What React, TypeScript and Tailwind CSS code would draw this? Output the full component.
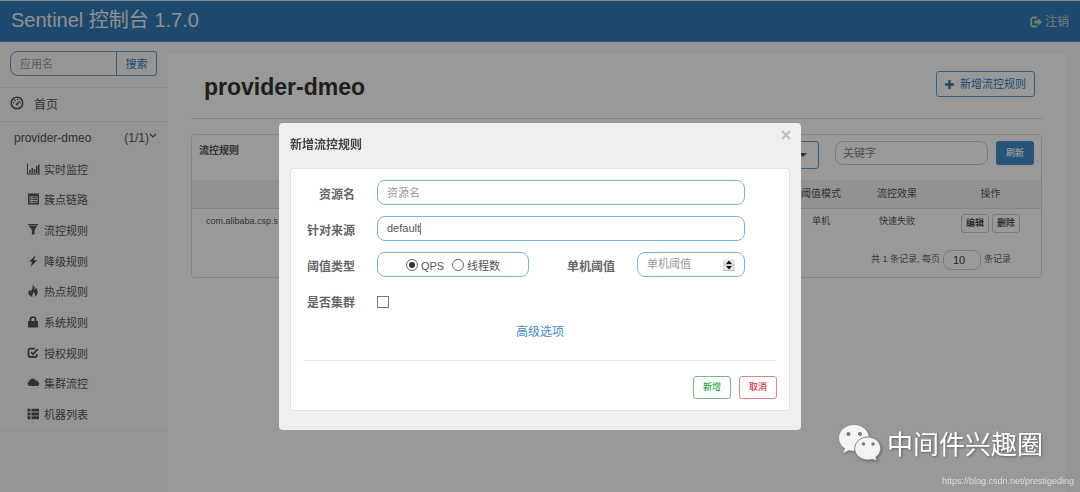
import type { ReactNode } from 'react'

type MenuItem = {
  label: string
  icon: ReactNode
}

const menu: MenuItem[] = [
  {
    label: '实时监控',
    icon: (
      <>
        <path d="M0 .5h1v10h12v1H0z" />
        <path d="M2.2 7h1.500v3H2.200zM4.500 5H6v5H4.500zM6.800 6h1.500v4H6.800zM9 3h1.500v7H9zM11 1.500h1.500V10H11z" />
      </>
    ),
  },
  {
    label: '簇点链路',
    icon: (
      <path
        fillRule="evenodd"
        d="M1 .5h11v11H1zM2.500 3v7h8V3zM3 3.500h1.500v1.300H3zM5.300 3.500H10v1.300H5.300zM3 5.700h1.500V7H3zM5.300 5.700H10V7H5.300zM3 8h1.500v1.300H3zM5.300 8H10v1.300H5.300z"
      />
    ),
  },
  { label: '流控规则', icon: <path d="M1 0h10v1.300H1zM1.700 1.800h8.600L7.600 6v4L4.900 11V6z" /> },
  { label: '降级规则', icon: <path d="M8.500.3 2.200 6.700h3L3.500 11.700 10.300 5.200H7z" /> },
  {
    label: '热点规则',
    icon: (
      <path d="M5.500 0c2.900 1.500 1.700 3.800 1.900 5 .9-.4 1.100-1.600.7-2.800 3 1.800 4.100 7.200-.5 9.600.9-2.400.1-3.600-1.100-4.700.1 1.600-1.900 2.500-1 4.800C1.600 10.700 0 7.900 2.600 4.400c.1 1.100.4 1.600.9 1.900C5.400 4.600 6.200 2.500 5.500 0z" />
    ),
  },
  {
    label: '系统规则',
    icon: (
      <path
        fillRule="evenodd"
        d="M2.500 5V3.500C2.500 1.500 3.800.3 6 .3s3.500 1.200 3.500 3.200V5H11v6.500H1V5zm1.900 0h3.200V3.500C7.600 2.500 7 2 6 2s-1.600.5-1.600 1.500z"
      />
    ),
  },
  {
    label: '授权规则',
    icon: (
      <path
        d="M8 1.700H3.200A1.700 1.700 0 0 0 1.500 3.400v4.900A1.700 1.700 0 0 0 3.200 10h4.900a1.700 1.700 0 0 0 1.700-1.700V7M4 5l2 2.200 4.900-5"
        fill="none"
        stroke="currentColor"
        strokeWidth="1.800"
      />
    ),
  },
  {
    label: '集群流控',
    icon: (
      <path d="M2.500 9A2.300 2.300 0 0 1 2 4.600C2.500 3 3.700 1.500 5.600 1.500c1.600 0 2.700.9 3.100 2.100 1-.2 1.900.3 2.200 1.200A2.200 2.200 0 0 1 10.500 9z" />
    ),
  },
  {
    label: '机器列表',
    icon: <path d="M.5.700h3v2.900h-3zM4.500.700h7.500v2.900H4.500zM.5 4.500h3v2.900h-3zM4.500 4.500h7.500v2.900H4.500zM.5 8.300h3v2.900h-3zM4.500 8.300h7.500v2.900H4.500z" />,
  },
]

const fieldClass =
  'h-[25px] rounded-lg border border-[#7fb0dc] bg-white px-[9px] text-[11px] text-[#555] outline-none placeholder:text-[#999]'
const labelClass = 'w-16 shrink-0 pt-1 text-right text-xs font-bold text-[#666]'
const radioClass =
  'size-3 appearance-none rounded-full border border-[#666] bg-white bg-clip-content p-[2px] checked:bg-[#333]'

function Header() {
  return (
    <header className="flex h-[42px] items-center justify-between border-y border-t-[#dbe6f0] border-b-[#5c8ab5] bg-[#337ab7] px-[11px]">
      <h1 className="pb-[2px] text-xl text-[#eee]">Sentinel 控制台 1.7.0</h1>
      <a href="#logout" className="flex items-center gap-[3px] pt-[2px] text-xs text-[#bcd6c0]">
        <svg viewBox="0 0 12 12" className="size-3" fill="currentColor">
          <path
            d="M7 1.500H3.200a2 2 0 0 0-2 2v5a2 2 0 0 0 2 2H7"
            fill="none"
            stroke="currentColor"
            strokeWidth="1.800"
          />
          <path d="M8 2.300 12 6 8 9.700V7.500H4.500v-3H8z" />
        </svg>
        注销
      </a>
    </header>
  )
}

function Sidebar() {
  return (
    <aside className="w-[168px] shrink-0 text-[#555]">
      <div className="flex h-[46px] items-start border-b border-[#e7e7e7] px-[10px] pt-[9px]">
        <input
          aria-label="应用名"
          placeholder="应用名"
          className="h-[25px] w-[107px] rounded-l-lg border border-[#5f9fd6] px-[9px] text-[11px] outline-none placeholder:text-[#999]"
        />
        <button className="-ml-px h-[25px] w-[41px] rounded-r-[3px] border border-[#5f9fd6] pt-px text-[11px] text-[#337ab7]">
          搜索
        </button>
      </div>
      <a href="#home" className="flex h-[34px] items-center gap-[10px] border-b border-[#e7e7e7] px-[10px] text-xs">
        <svg viewBox="0 0 14 14" className="mb-1 size-[14px]" fill="currentColor">
          <circle cx="7" cy="7" r="5.800" fill="none" stroke="currentColor" strokeWidth="1.600" />
          <path d="m6.300 7.500 3.400-3 .6.500-2.600 3.500a1 1 0 1 1-1.400-1z" />
          <circle cx="3.700" cy="6.700" r=".8" />
          <circle cx="5" cy="4.400" r=".8" />
          <circle cx="7.500" cy="3.500" r=".8" />
          <circle cx="10.300" cy="7" r=".8" />
        </svg>
        首页
      </a>
      <div className="flex h-8 items-center px-[14px] text-xs">
        <span className="flex-1">provider-dmeo</span>
        <span>(1/1)</span>
        <svg viewBox="0 0 8 8" className="-mr-[3px] mb-1 size-2" fill="none" stroke="currentColor" strokeWidth="1.200">
          <path d="m1 2 3 3 3-3" />
        </svg>
      </div>
      <nav className="grid h-[277px] auto-rows-fr border-b border-[#eee]">
        {menu.map((item) => (
          <a key={item.label} href="#menu" className="flex items-center gap-1 pt-px pl-[27px] text-[11px]">
            <svg viewBox="0 0 13 12" className="mb-[2px] h-3 w-[13px]" fill="currentColor">
              {item.icon}
            </svg>
            {item.label}
          </a>
        ))}
      </nav>
    </aside>
  )
}

function RuleCard() {
  const smallButton = 'h-[19px] rounded-[3px] border border-[#ccc] px-1 text-[9px] font-medium text-[#333]'
  return (
    <section className="mt-[15px] rounded border border-[#ddd]">
      <div className="flex h-[45px] items-start px-[7px] pt-[6px]">
        <h3 className="flex-1 pt-[2px] text-[10px] font-bold text-[#555]">流控规则</h3>
        <button
          aria-label="机器"
          className="mr-4 flex h-7 w-[180px] items-center justify-end rounded-[3px] border border-[#5f9fd6] pr-[11px] text-[#555]"
        >
          <svg viewBox="0 0 8 4" className="h-1 w-2" fill="currentColor">
            <path d="M0 0h8L4 4z" />
          </svg>
        </button>
        <input
          aria-label="关键字"
          placeholder="关键字"
          className="mr-2 h-6 w-[153px] rounded-lg border border-[#ccc] px-[7px] text-[11px] outline-none placeholder:text-[#888]"
        />
        <button className="h-6 w-[38px] rounded-[3px] bg-[#428bca] pt-px text-[9px] font-medium text-white">刷新</button>
      </div>
      <table className="w-full table-fixed text-center text-[#555]">
        <colgroup>
          <col />
          <col className="w-[66px]" />
          <col className="w-[86px]" />
          <col className="w-[101px]" />
        </colgroup>
        <thead>
          <tr className="h-7 border-b border-[#ddd] bg-[#f0f3f7] text-[10px]">
            <th></th>
            <th className="font-normal">阈值模式</th>
            <th className="font-normal">流控效果</th>
            <th className="font-normal">操作</th>
          </tr>
        </thead>
        <tbody>
          <tr className="h-[30px] text-[9px]">
            <td className="pb-1 pl-[14px] text-left">com.alibaba.csp.s</td>
            <td className="pb-1">单机</td>
            <td className="pb-1">快速失败</td>
            <td>
              <div className="flex justify-center gap-[3px]">
                <button className={smallButton}>编辑</button>
                <button className={smallButton}>删除</button>
              </div>
            </td>
          </tr>
        </tbody>
      </table>
      <div className="flex h-[39px] items-center justify-end gap-[3px] pt-1 pr-[30px] text-[9px] text-[#666]">
        <span>共 1 条记录, 每页</span>
        <input
          aria-label="每页"
          defaultValue="10"
          className="h-5 w-[38px] rounded-lg border border-[#ccc] px-[9px] text-[11px] text-[#444] outline-none"
        />
        <span>条记录</span>
      </div>
    </section>
  )
}

function RuleDialog() {
  return (
    <div className="fixed inset-0 flex items-start justify-center bg-black/40 pt-[123px]">
      <div role="dialog" aria-labelledby="dialog-title" className="w-[522px] rounded bg-[#efefef] px-[11px] pb-[19px]">
        <div className="relative flex h-[45px] items-center">
          <h4 id="dialog-title" className="pb-[2px] text-xs font-bold text-[#444]">
            新增流控规则
          </h4>
          <button aria-label="关闭" className="absolute top-[3px] -right-[5px] p-1 text-[#bbb]">
            <svg viewBox="0 0 10 10" className="size-[10px]" stroke="currentColor" strokeWidth="2">
              <path d="m1 1 8 8M9 1 1 9" />
            </svg>
          </button>
        </div>
        <form className="rounded border border-[#e1e1e1] bg-white px-3 py-[11px]">
          <div className="-ml-3 flex flex-col gap-[11px] pr-8">
            <div className="flex items-center gap-[22px]">
              <label htmlFor="resource" className={labelClass}>资源名</label>
              <input id="resource" placeholder="资源名" className={`${fieldClass} min-w-0 flex-1`} />
            </div>
            <div className="flex items-center gap-[22px]">
              <label htmlFor="origin" className={labelClass}>针对来源</label>
              <div className={`${fieldClass} flex min-w-0 flex-1 items-center`}>
                <input id="origin" defaultValue="default" className="w-[33px] outline-none" />
                <span className="h-3 w-px bg-[#777]" />
              </div>
            </div>
            <div className="flex items-center gap-[22px]">
              <span className={labelClass}>阈值类型</span>
              <div className={`${fieldClass} flex w-[152px] items-center justify-center gap-2`}>
                <label className="flex items-center gap-[3px]">
                  <input type="radio" name="grade" defaultChecked className={radioClass} />
                  <span className="pt-1">QPS</span>
                </label>
                <label className="flex items-center gap-[3px]">
                  <input type="radio" name="grade" className={radioClass} />
                  <span className="pt-1">线程数</span>
                </label>
              </div>
              <label htmlFor="count" className={labelClass}>单机阈值</label>
              <div className={`${fieldClass} flex min-w-0 flex-1 items-center`}>
                <input
                  id="count"
                  type="number"
                  placeholder="单机阈值"
                  className="min-w-0 flex-1 outline-none [appearance:textfield] placeholder:text-[#999]"
                />
                <svg viewBox="0 0 12 12" className="size-3">
                  <path d="M0 .5h12v11H0z" fill="#e4e4e4" />
                  <path d="M0 11.500h12M0 6h12" stroke="#bbb" />
                  <path d="M3 5l3-3.500L9 5zM3 7l3 3.500L9 7z" fill="#111" />
                </svg>
              </div>
            </div>
            <div className="flex h-[25px] items-center gap-[22px]">
              <label htmlFor="cluster" className={labelClass}>是否集群</label>
              <input
                id="cluster"
                type="checkbox"
                className="mt-[2px] size-3 appearance-none border border-[#777] bg-white checked:bg-[#337ab7]"
              />
            </div>
          </div>
          <div className="border-b border-[#e8e8e8] pt-[11px] pb-5 text-center text-xs leading-4">
            <a href="#advanced" className="text-[#428bca]">高级选项</a>
          </div>
          <div className="flex justify-end gap-2 pt-[15px]">
            <button type="button" className="h-[23px] w-[38px] rounded-[3px] border border-[#6cc083] pt-px text-[9px] font-medium text-[#28a745]">
              新增
            </button>
            <button type="button" className="h-[23px] w-[38px] rounded-[3px] border border-[#e8808a] pt-px text-[9px] font-medium text-[#dc3545]">
              取消
            </button>
          </div>
        </form>
      </div>
    </div>
  )
}

function Watermark() {
  return (
    <div className="pointer-events-none fixed right-[6px] bottom-1 flex flex-col items-end text-white">
      <div className="mr-[31px] mb-[10px] flex items-center gap-[6px] drop-shadow-[1px_1px_1px_#666]">
        <svg viewBox="0 0 42 36" className="mb-1 h-9 w-[42px]">
          <path
            fill="#f3f3f3"
            d="M15 0C6.500 0 0 5.700 0 13c0 4.400 2.300 8 6 10.500L4.500 28l5.300-2.700c1.800.5 3.500.7 5.200.7 8.300 0 15-5.800 15-13S23.300 0 15 0z"
          />
          <path
            fill="#f3f3f3"
            stroke="#888"
            d="M29 12c-7.300 0-13.300 5-13.300 11.500S21.700 35 29 35c1.600 0 3-.3 4.500-.7L38 36l-1.200-4c3-2.200 4.900-5 4.900-8.500C41.700 17 36 12 29 12z"
          />
          <g fill="#777">
            <circle cx="9.500" cy="9" r="2" />
            <circle cx="21" cy="9" r="2" />
            <circle cx="24.500" cy="19" r="1.700" />
            <circle cx="34" cy="19" r="1.700" />
          </g>
        </svg>
        <span className="text-[26px] leading-9">中间件兴趣圈</span>
      </div>
      <span className="text-[9px] text-[#ddd]">https://blog.csdn.net/prestigeding</span>
    </div>
  )
}

export default function App() {
  return (
    <div className="flex min-h-screen flex-col bg-[#f8f8f8] font-['Liberation_Sans','Noto_Sans_CJK_SC',sans-serif]">
      <Header />
      <div className="flex flex-1">
        <Sidebar />
        <main className="mt-3 mr-[15px] flex-1 bg-white px-[23px] pt-[17px]">
          <div className="flex h-12 items-start justify-between border-b border-[#ddd] pr-[7px] pl-[13px]">
            <h2 className="text-[23px] leading-8 font-bold text-[#333]">provider-dmeo</h2>
            <button className="flex h-[26px] items-center gap-[6px] rounded-[3px] border border-[#5f9fd6] px-2 text-[11px] text-[#337ab7]">
              <svg viewBox="0 0 9 9" className="size-[9px]" stroke="currentColor" strokeWidth="2.400">
                <path d="M4.500 0v9M0 4.500h9" />
              </svg>
              新增流控规则
            </button>
          </div>
          <RuleCard />
        </main>
      </div>
      <RuleDialog />
      <Watermark />
    </div>
  )
}
